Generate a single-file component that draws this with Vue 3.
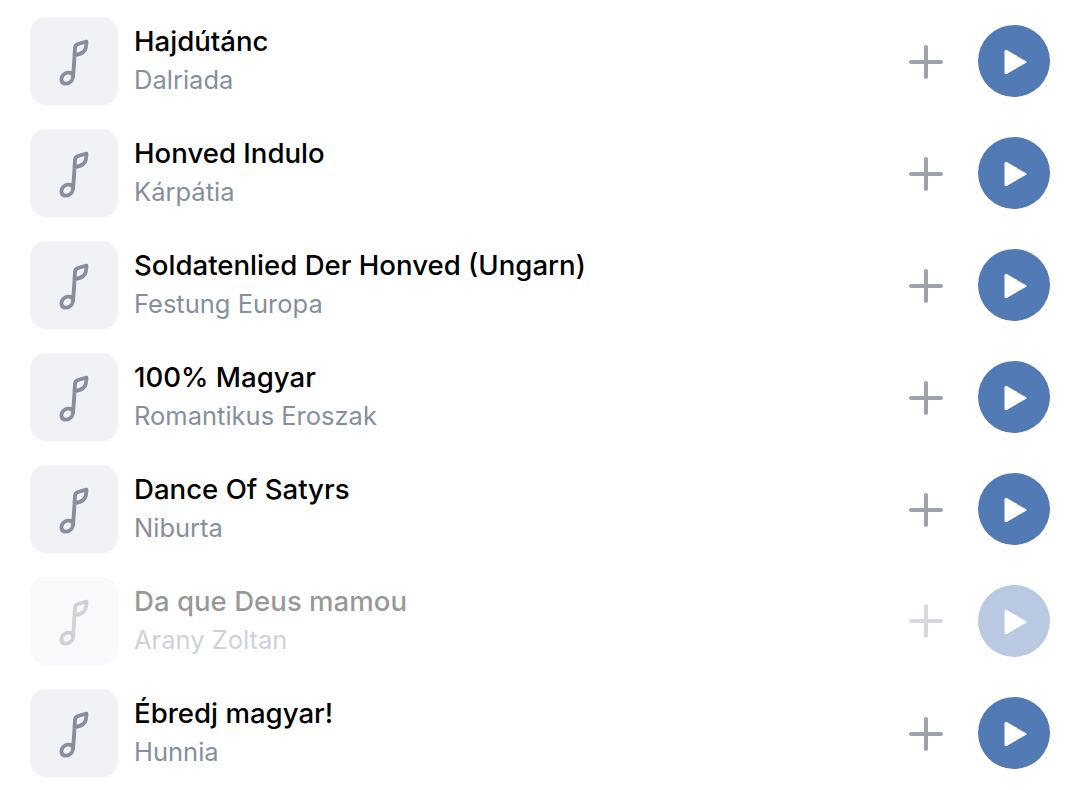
<template>
  <div class="track-list">
    <div
      v-for="track in tracks"
      :key="track.title"
      class="track"
      :class="{ disabled: track.disabled }"
    >
      <div class="cover">
        <svg class="note" width="36" height="52" viewBox="0 0 36 52" fill="none">
          <path d="M17.2 41.5 C17 45.5 13.5 48.6 9.8 48.6 C7 48.6 5.4 46.9 5.4 44.4 C5.4 40.6 8.8 37.7 12.6 37.7 C14.8 37.7 16.8 39 17.2 41.5 L19 12.8 C19.2 10.6 20.2 9.6 22 9 L30.4 6.6 C30.6 11 29.8 14.8 27.2 17 C25 18.9 21.8 19.8 18.3 19.8" stroke="currentColor" stroke-width="3.8" stroke-linecap="round" stroke-linejoin="round" />
        </svg>
      </div>
      <div class="info">
        <div class="title">{{ track.title }}</div>
        <div class="artist">{{ track.artist }}</div>
      </div>
      <button class="add">
        <svg width="36" height="36" viewBox="0 0 36 36" fill="none">
          <path d="M18 3 V33 M3 18 H33" stroke="currentColor" stroke-width="4" stroke-linecap="round" />
        </svg>
      </button>
      <button class="play">
        <svg width="26" height="28" viewBox="0 0 26 28">
          <path d="M2.5 3.5 C2.5 2.2 3.7 1.5 4.8 2.1 L23.8 13 C24.8 13.6 24.8 14.4 23.8 15 L4.8 25.9 C3.7 26.5 2.5 25.8 2.5 24.5 Z" fill="#fff" />
        </svg>
      </button>
    </div>
  </div>
</template>

<script setup>
const tracks = [
  { title: "Hajdútánc", artist: "Dalriada" },
  { title: "Honved Indulo", artist: "Kárpátia" },
  { title: "Soldatenlied Der Honved (Ungarn)", artist: "Festung Europa" },
  { title: "100% Magyar", artist: "Romantikus Eroszak" },
  { title: "Dance Of Satyrs", artist: "Niburta" },
  { title: "Da que Deus mamou", artist: "Arany Zoltan", disabled: true },
  { title: "Ébredj magyar!", artist: "Hunnia" }
]
</script>

<style>
html,
body {
  background: #fff;
  overflow: hidden;
}
</style>

<style scoped>
.track-list {
  display: flex;
  flex-direction: column;
  padding: 5px 36px 0 30px;
  font-family: Inter, "Noto Sans", sans-serif;
}

.track {
  display: flex;
  align-items: center;
  height: 112px;
}

.cover {
  width: 88px;
  height: 88px;
  flex: none;
  display: flex;
  align-items: center;
  justify-content: center;
  border-radius: 16px;
  background: #f0f2f6;
  color: #878f9d;
}

.info {
  flex: 1;
  margin-left: 16px;
  padding-bottom: 1px;
  min-width: 0;
}

.title {
  font-size: 27.6px;
  line-height: 36px;
  font-weight: 500;
  color: #000;
}

.artist {
  margin-top: 3px;
  font-size: 25.5px;
  line-height: 36px;
  color: #878f9d;
}

.add,
.play {
  padding: 0;
  border: none;
  display: flex;
  align-items: center;
  justify-content: center;
  cursor: pointer;
}

.add {
  width: 36px;
  height: 36px;
  margin-top: 1px;
  margin-right: 34px;
  background: none;
  color: #9da3ad;
}

.play {
  width: 72px;
  height: 72px;
  border-radius: 50%;
  background: #527ab5;
}

.play svg {
  margin-left: 2px;
  margin-top: 2px;
}

.disabled {
  opacity: 0.4;
}

.disabled .add {
  margin-top: -1px;
}
</style>
